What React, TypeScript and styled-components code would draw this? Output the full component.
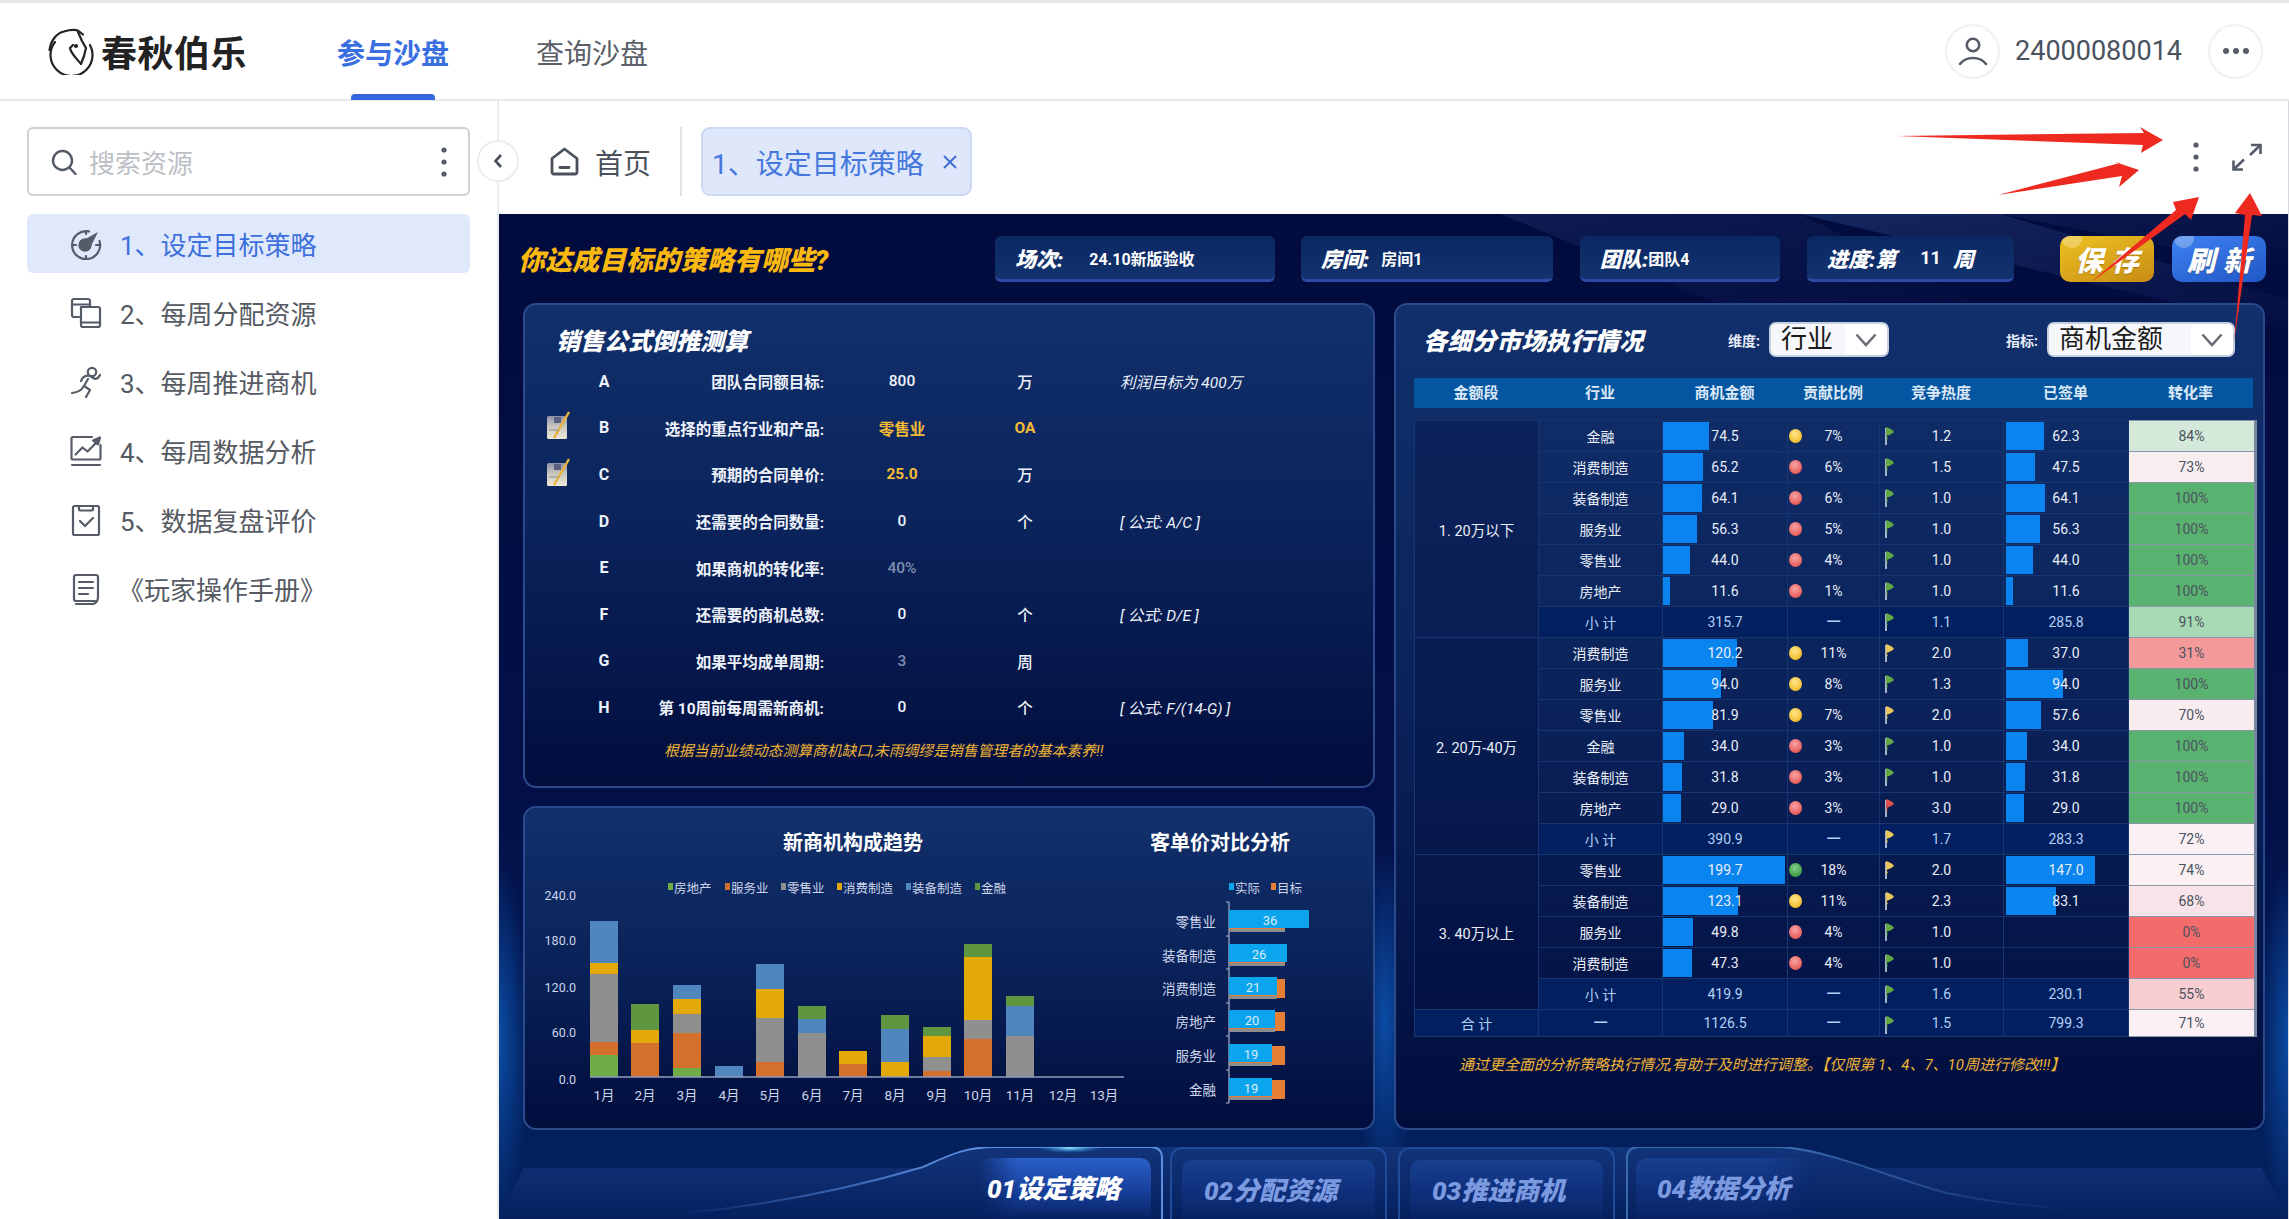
import React from "react";
import styled, { createGlobalStyle } from "styled-components";

const FONT = `Roboto, "Noto Sans CJK SC", sans-serif`;

const GlobalStyle = createGlobalStyle`
  html, body {
    margin: 0;
    width: 2289px;
    height: 1219px;
    overflow: hidden;
    background: #fff;
    font-family: ${FONT};
  }
  * { box-sizing: border-box; }
`;

const Page = styled.div`
  width: 2289px;
  height: 1219px;
  display: flex;
  flex-direction: column;
  position: relative;
  overflow: hidden;
`;

/* ---------- header ---------- */

const Header = styled.header`
  height: 101px;
  flex: none;
  display: flex;
  align-items: center;
  padding: 0 26px 0 47px;
  border-top: 3px solid #e6e6e8;
  border-bottom: 2px solid #e9e9eb;
`;

const Logo = styled.div`
  display: flex;
  align-items: center;
  gap: 7px;
  width: 290px;
  font-size: 36px;
  font-weight: 700;
  color: #222;
  letter-spacing: 0.5px;
`;

const HeadTab = styled.div<{ $active?: boolean }>`
  position: relative;
  width: 199px;
  height: 96px;
  line-height: 103px;
  font-size: 28px;
  font-weight: ${({ $active }) => ($active ? 700 : 400)};
  color: ${({ $active }) => ($active ? "#3a6fe2" : "#5a5f68")};

  &::after {
    content: "";
    display: ${({ $active }) => ($active ? "block" : "none")};
    position: absolute;
    left: 14px;
    bottom: -1px;
    width: 84px;
    height: 6px;
    border-radius: 4px 4px 0 0;
    background: #3566dd;
  }
`;

const UserBox = styled.div`
  margin-left: auto;
  display: flex;
  align-items: center;
  gap: 15px;
  font-size: 27px;
  color: #4a5260;
`;

const RoundIcon = styled.div`
  width: 55px;
  height: 55px;
  display: flex;
  align-items: center;
  justify-content: center;
  border: 2px solid #f1f1f3;
  border-radius: 50%;
  background: #fff;
`;

const MoreRound = styled(RoundIcon)`
  margin-left: 11px;
`;

/* ---------- body + sidebar ---------- */

const Body = styled.div`
  flex: 1;
  display: flex;
  min-height: 0;
  position: relative;
`;

const Sidebar = styled.aside`
  width: 499px;
  flex: none;
  padding: 26px 27px 0;
  border-right: 2px solid #ececee;
`;

const SearchBox = styled.div`
  height: 69px;
  display: flex;
  align-items: center;
  padding: 0 21px 0 22px;
  border: 2px solid #cfcfd4;
  border-radius: 6px;
  font-size: 26px;
  color: #bcbfc4;
`;

const SearchText = styled.span`
  margin-left: 12px;
  flex: 1;
`;

const SideNav = styled.nav`
  margin-top: 18px;
  display: flex;
  flex-direction: column;
  gap: 10px;
`;

const SideItem = styled.div<{ $active?: boolean }>`
  height: 59px;
  display: flex;
  align-items: center;
  gap: 18px;
  padding-left: 43px;
  border-radius: 6px;
  font-size: 26px;
  color: ${({ $active }) => ($active ? "#3d70dc" : "#555a63")};
  background: ${({ $active }) => ($active ? "#e0e9fc" : "transparent")};
`;

const ManualText = styled.span`
  margin-left: -2px;
  white-space: nowrap;
`;

const CollapseButton = styled.div`
  position: absolute;
  left: 477px;
  top: 39px;
  width: 42px;
  height: 42px;
  display: flex;
  align-items: center;
  justify-content: center;
  background: #fff;
  border: 2px solid #ececee;
  border-radius: 50%;
  z-index: 2;
`;

/* ---------- main column ---------- */

const Main = styled.main`
  flex: 1;
  min-width: 0;
  display: flex;
  flex-direction: column;
  border-right: 1px solid #d8d8dc;
`;

const TabBar = styled.div`
  height: 113px;
  flex: none;
  display: flex;
  align-items: flex-start;
  padding: 26px 26px 0 51px;
`;

const HomeTab = styled.div`
  height: 69px;
  display: flex;
  align-items: center;
  gap: 16px;
  font-size: 28px;
  color: #4b515c;
`;

const TabDivider = styled.div`
  width: 2px;
  height: 69px;
  margin: 0 19px 0 29px;
  background: #e2e2e6;
`;

const OpenTab = styled.div`
  width: 271px;
  height: 69px;
  display: flex;
  align-items: center;
  padding: 0 12px 0 9px;
  font-size: 28px;
  color: #4577dd;
  background: #dfe8fb;
  border: 2px solid #cbd9f6;
  border-radius: 9px;
`;

const OpenTabLabel = styled.span`
  flex: 1;
  white-space: nowrap;
`;

const TabActions = styled.div`
  margin-left: auto;
  margin-top: 15px;
  display: flex;
  align-items: center;
  gap: 33px;
`;

/* ---------- dark stage ---------- */

const Stage = styled.section`
  flex: 1;
  position: relative;
  overflow: hidden;
  background: linear-gradient(180deg, #020b3d 0%, #031048 58%, #03205c 91%, #04215e 100%);
`;

const StageDecor = styled.svg`
  position: absolute;
  left: 0;
  top: 0;
`;

const StageInner = styled.div`
  position: relative;
  display: flex;
  flex-direction: column;
  height: 100%;
  padding: 22px 0 0 21px;
`;

const TopRow = styled.div`
  height: 46px;
  display: flex;
  align-items: center;
`;

const PageTitle = styled.h1`
  width: 475px;
  flex: none;
  margin: -2px 0 0 -2px;
  font-size: 27px;
  font-weight: 900;
  font-style: italic;
  color: #fbb80f;
  white-space: nowrap;
`;

const InfoBadge = styled.div<{ $width: number; $gap: number; $first?: boolean }>`
  width: ${({ $width }) => $width}px;
  height: 46px;
  flex: none;
  margin-left: ${({ $first }) => ($first ? 2 : 0)}px;
  margin-right: ${({ $gap }) => $gap}px;
  display: flex;
  align-items: center;
  padding-left: 20px;
  color: #fff;
  background: linear-gradient(180deg, #0b2762, #12336f);
  border-bottom: 3px solid #2e4aa5;
  border-radius: 6px;
  white-space: nowrap;
`;

const BadgeLabel = styled.span<{ $left?: number }>`
  margin-left: ${({ $left }) => $left ?? 0}px;
  font-size: 21px;
  font-style: italic;
  font-weight: 900;
`;

const BadgeValue = styled.span<{ $left: number; $large?: boolean }>`
  margin-left: ${({ $left }) => $left}px;
  font-size: ${({ $large }) => ($large ? 18 : 16)}px;
  font-weight: 700;
`;

const ActionButton = styled.div<{ $from: string; $to: string; $gap?: number }>`
  position: relative;
  overflow: hidden;
  width: 94px;
  height: 46px;
  flex: none;
  margin-right: ${({ $gap }) => $gap ?? 0}px;
  display: flex;
  align-items: center;
  justify-content: center;
  border-radius: 10px;
  background: linear-gradient(160deg, ${({ $from }) => $from}, ${({ $to }) => $to});
  color: #fff;
  font-size: 28px;
  font-weight: 900;
  font-style: italic;
  letter-spacing: 8px;
  text-indent: 8px;
  text-shadow: 0 1px 1px rgba(80, 50, 0, 0.35);

  &::before {
    content: "";
    position: absolute;
    left: 2px;
    top: -6px;
    width: 20px;
    height: 18px;
    border-radius: 50%;
    background: rgba(255, 255, 255, 0.28);
  }
`;

const Columns = styled.div`
  margin: 21px 0 0 3px;
  display: grid;
  grid-template-columns: 852px 871px;
  column-gap: 19px;
  height: 827px;
`;

const LeftColumn = styled.div`
  display: flex;
  flex-direction: column;
  gap: 18px;
`;

const Panel = styled.div`
  border: 2px solid #2b4a8c;
  border-radius: 13px;
  background: linear-gradient(180deg, #11306c 0%, #0a2259 50%, #010d3d 100%);
`;

const FormulaPanel = styled(Panel)`
  height: 485px;
  padding: 21px 0 0 21px;
`;

const PanelTitle = styled.h2`
  margin: 0;
  height: 32px;
  line-height: 32px;
  font-size: 24px;
  font-weight: 900;
  font-style: italic;
  color: #fff;
  white-space: nowrap;
`;

const FormulaTitle = styled(PanelTitle)`
  margin-left: 10px;
`;

const FormulaRow = styled.div`
  height: 46.6px;
  display: grid;
  grid-template-columns: 44px 28px 206px 156px 90px 1fr;
  align-items: center;
  font-size: 15.5px;
  color: #eef2fa;
`;

const RowLetter = styled.span`
  text-align: center;
  font-weight: 700;
  font-size: 16px;
`;

const RowLabel = styled.span`
  text-align: right;
  white-space: nowrap;
  font-weight: 700;
`;

const RowValue = styled.span<{ $tone?: "gold" | "dim" }>`
  text-align: center;
  font-weight: ${({ $tone }) => ($tone === "gold" ? 700 : 500)};
  color: ${({ $tone }) =>
    $tone === "gold" ? "#f5bb35" : $tone === "dim" ? "#7f8db0" : "#eef2fa"};
`;

const RowNote = styled.span`
  margin-left: 50px;
  font-style: italic;
  white-space: nowrap;
  font-weight: 400;
`;

const GoldNote = styled.p`
  margin: 10px 0 0 118px;
  height: 20px;
  line-height: 20px;
  font-size: 14.8px;
  font-style: italic;
  color: #f0b335;
  white-space: nowrap;
`;

const ChartsPanel = styled(Panel)`
  height: 324px;
  display: flex;
  padding-top: 20px;
`;

const ChartBlock = styled.div<{ $width: number }>`
  width: ${({ $width }) => $width}px;
  flex: none;
`;

const ChartTitle = styled.h3<{ $pad: number; $narrow?: boolean }>`
  margin: 0;
  width: ${({ $narrow }) => ($narrow ? "170px" : "auto")};
  height: 30px;
  line-height: 30px;
  padding-left: ${({ $pad }) => $pad}px;
  text-align: center;
  font-size: 20px;
  font-weight: 700;
  color: #fff;
`;

const ChartSvg = styled.svg`
  display: block;
`;

const ChartText = styled.text`
  font-family: ${FONT};
  font-size: 13.5px;
  fill: #cdd6ea;
`;

const LegendText = styled(ChartText)`
  font-size: 12.5px;
`;

const CategoryText = styled(ChartText)`
  font-size: 13.5px;
`;

const BarValueText = styled(ChartText)`
  font-size: 13px;
  fill: #d8ecfa;
`;

/* ---------- market table ---------- */

const MarketPanel = styled(Panel)`
  padding-top: 17px;
`;

const MarketHead = styled.div`
  height: 35px;
  display: flex;
  align-items: center;
  padding-left: 27px;
`;

const MarketTitle = styled(PanelTitle)`
  width: 305px;
  margin-top: 5px;
  font-size: 24.5px;
`;

const FilterLabel = styled.span`
  width: 41px;
  font-size: 14px;
  font-weight: 700;
  color: #e6ebf6;
  white-space: nowrap;
`;

const Filter = styled.div<{ $width: number; $gap?: number }>`
  width: ${({ $width }) => $width}px;
  height: 35px;
  margin-right: ${({ $gap }) => $gap ?? 0}px;
  display: flex;
  overflow: hidden;
  font-size: 26px;
  color: #1a1a1a;
  background: #fff;
  border: 2px solid #c6cfdf;
  border-radius: 7px;
  white-space: nowrap;
`;

const FilterValue = styled.span`
  flex: 1;
  padding-left: 10px;
  line-height: 31px;
  background: #f6f7fb;
`;

const FilterChevron = styled.span`
  width: 42px;
  flex: none;
  display: flex;
  align-items: center;
  justify-content: center;
`;

const TableWrap = styled.div`
  margin: 21px 0 0 18px;
  width: 843px;
`;

const HeadRow = styled.div`
  width: 839px;
  height: 30px;
  display: grid;
  grid-template-columns: 124px 124px 125px 92px 124px 125px 125px;
  background: #03569f;
`;

const HeadCell = styled.div`
  text-align: center;
  line-height: 30px;
  font-size: 15px;
  font-weight: 700;
  color: #dbe8f7;
`;

const BodyTable = styled.table`
  margin-top: 12px;
  width: 841px;
  table-layout: fixed;
  border-collapse: collapse;
  font-size: 14px;
  color: #e9eef8;
`;

const SegmentCell = styled.td`
  padding: 0;
  text-align: center;
  font-size: 14.5px;
  border: 1px solid #173571;
  background: rgba(2, 14, 60, 0.28);
`;

const DataCell = styled.td<{ $sum?: boolean }>`
  position: relative;
  height: 31px;
  padding: 0;
  text-align: center;
  border: 1px solid #173571;
  background: ${({ $sum }) => ($sum ? "#02205f" : "transparent")};
  color: ${({ $sum }) => ($sum ? "#b3d0f7" : "#e9eef8")};
`;

const TotalRow = styled.tr`
  & > td {
    height: 27px;
  }
`;

const BarFill = styled.span<{ $inset?: number }>`
  position: absolute;
  left: ${({ $inset }) => $inset ?? 0}px;
  top: 1px;
  height: 28px;
  background: #0a84ef;
`;

const CellText = styled.span`
  position: relative;
`;

const Dash = styled.span`
  font-size: 20px;
  line-height: 1;
`;

const HeatDot = styled.span<{ $color: string; $light: string }>`
  position: absolute;
  left: 1px;
  top: 8px;
  width: 13px;
  height: 14px;
  border-radius: 50%;
  background: radial-gradient(circle at 45% 35%, ${({ $light }) => $light}, ${({ $color }) => $color} 70%);
`;

const FlagWrap = styled.span`
  position: absolute;
  left: 2px;
  top: 5px;
  display: block;
  line-height: 0;
`;

const RateCell = styled.td<{ $bg: string }>`
  padding: 0;
  text-align: center;
  color: #4b5260;
  background: ${({ $bg }) => $bg};
  border: 1px solid #8d97ac;
  border-right: 3px solid #7a869f;
`;

const MarketNote = styled.p`
  margin: 18px 0 0 63px;
  height: 20px;
  line-height: 20px;
  font-size: 15px;
  font-style: italic;
  color: #f0b335;
  white-space: nowrap;
`;

/* ---------- bottom step tabs ---------- */

const StepRow = styled.div`
  position: relative;
  margin: 17px 0 0 -21px;
  flex: 1;
  display: flex;
  padding-left: 470px;
`;

const StepBand = styled.svg`
  position: absolute;
  left: 0;
  top: 0;
`;

const StepTab = styled.div<{ $width: number; $gap: number; $framed?: boolean }>`
  position: relative;
  width: ${({ $width }) => $width}px;
  margin-right: ${({ $gap }) => $gap}px;
  padding: 11px 10px 0;
  border: ${({ $framed }) => ($framed ? "2px solid #1f4b98" : "none")};
  border-bottom: none;
  border-radius: 12px 12px 0 0;
`;

const StepInner = styled.div<{ $active?: boolean; $fade?: "left" | "right" }>`
  height: 100%;
  border-radius: 10px 10px 0 0;
  background: linear-gradient(
    180deg,
    ${({ $active }) => ($active ? "#2a5fca" : "#17408f")} 0%,
    ${({ $active }) => ($active ? "#173f9a" : "#0f2f7b")} 55%,
    rgba(12, 40, 110, 0.25) 100%
  );
  mask-image: ${({ $fade }) =>
    $fade === "left"
      ? "linear-gradient(90deg, transparent, #000 22%)"
      : $fade === "right"
        ? "linear-gradient(270deg, transparent, #000 30%)"
        : "none"};
`;

const StepLabel = styled.div<{ $active?: boolean; $inset: number }>`
  position: absolute;
  left: ${({ $inset }) => $inset}px;
  top: 20px;
  font-size: 26px;
  line-height: 44px;
  font-weight: 900;
  font-style: italic;
  color: ${({ $active }) => ($active ? "#fff" : "#7c9ae0")};
  white-space: nowrap;
`;

const ArrowLayer = styled.svg`
  position: absolute;
  left: 0;
  top: 0;
  pointer-events: none;
  z-index: 5;
`;

/* ---------- icons ---------- */

const ICON = "#555c68";

function LogoMark() {
  return (
    <svg width="47" height="47" viewBox="0 0 47 47" fill="none" stroke="#222" strokeWidth="2.2" strokeLinecap="round" strokeLinejoin="round">
      <path d="M8 14A21 21 0 1 0 43 17" />
      <path d="M2.500 22C4 12 10 5 17 3.500 22 2 27 1.500 31 2.500l5 4" />
      <path d="M31 4l4 9 4 7-2 8-3 8c-3-4-10-10-11-16l3-3" />
      <circle cx="29" cy="18" r="1" fill="#222" />
    </svg>
  );
}

function UserIcon() {
  return (
    <svg width="30" height="30" viewBox="0 0 30 30" fill="none" stroke="#555c68" strokeWidth="2.6" strokeLinecap="round">
      <circle cx="15" cy="9" r="6.2" />
      <path d="M2 28c3-4 8-6 13-6s10 2 13 6" />
    </svg>
  );
}

function HDots() {
  return (
    <svg width="28" height="8" viewBox="0 0 28 8" fill="#555c68">
      <circle cx="4" cy="4" r="3" />
      <circle cx="14" cy="4" r="3" />
      <circle cx="24" cy="4" r="3" />
    </svg>
  );
}

function VDots({ size = 30, fill = ICON }: { size?: number; fill?: string }) {
  return (
    <svg width="6" height={size} viewBox={`0 0 6 ${size}`} fill={fill}>
      <circle cx="3" cy="3" r="2.6" />
      <circle cx="3" cy={size / 2} r="2.6" />
      <circle cx="3" cy={size - 3} r="2.6" />
    </svg>
  );
}

function ExpandIcon() {
  return (
    <svg width="30" height="28" viewBox="0 0 30 28" fill="none" stroke="#555c68" strokeWidth="2.6">
      <path d="M19 2h9.5v9" />
      <path d="M28 2.500L18 12" />
      <path d="M11 26.500H1.500v-9" />
      <path d="M2 26l10-9.500" />
    </svg>
  );
}

function SearchIcon() {
  return (
    <svg width="26" height="26" viewBox="0 0 26 26" fill="none" stroke="#555c68" strokeWidth="2.4" strokeLinecap="round">
      <circle cx="11.5" cy="11.5" r="9.5" />
      <path d="M18.500 18.500L24.500 25" />
    </svg>
  );
}

function HomeIcon() {
  return (
    <svg width="29" height="29" viewBox="0 0 29 29" fill="none" stroke="#4b515c" strokeWidth="2.8" strokeLinejoin="round" strokeLinecap="round">
      <path d="M2 11.500L14.500 2 27 11.500V25a2 2 0 0 1-2 2H4a2 2 0 0 1-2-2z" />
      <path d="M10 20.500h9" />
    </svg>
  );
}

function NavIcon({ kind }: { kind: number }) {
  const common = { width: 32, height: 32, viewBox: "0 0 32 32", fill: "none", stroke: ICON, strokeWidth: 2.2, strokeLinecap: "round" as const, strokeLinejoin: "round" as const };
  if (kind === 0)
    return (
      <svg {...common}>
        <path d="M19 3.400A14 14 0 1 0 29.500 13" />
        <path d="M16 3v3M3 17h3M16 28v3M26 17h3" />
        <circle cx="15" cy="17" r="5.600" fill={ICON} />
        <path d="M12 13L28 4l-8 16z" fill={ICON} stroke="none" />
      </svg>
    );
  if (kind === 1)
    return (
      <svg {...common}>
        <path d="M20 9V4a2 2 0 0 0-2-2H4a2 2 0 0 0-2 2v14a2 2 0 0 0 2 2h5" />
        <path d="M2.500 7.500H19" />
        <path d="M11 10h17a2 2 0 0 1 2 2v16a2 2 0 0 1-2 2H13a2 2 0 0 1-2-2V10" />
        <path d="M11 25.500h19" />
      </svg>
    );
  if (kind === 2)
    return (
      <svg {...common}>
        <circle cx="22" cy="6" r="4.200" />
        <path d="M30 9c-1 2-3 4-5 4l-5-3c-3-1-6 0-8 3l-1 2" />
        <path d="M18 13l-4 7 6 4-4 7" />
        <path d="M13 21c-1 3-4 5-11 6" />
      </svg>
    );
  if (kind === 3)
    return (
      <svg {...common}>
        <path d="M22 2H3a1.500 1.500 0 0 0-1.500 1.500V23A1.500 1.500 0 0 0 3 24.500h26a1.500 1.500 0 0 0 1.500-1.500V10" />
        <path d="M5.500 19.500l7-7 5 4 9-9" />
        <path d="M23 5.500l7-3-2 7z" fill={ICON} />
        <path d="M2 30h28" />
      </svg>
    );
  if (kind === 4)
    return (
      <svg {...common}>
        <rect x="3" y="2" width="26" height="29" rx="1.500" />
        <path d="M9 2v3.500a1 1 0 0 0 1 1h12a1 1 0 0 0 1-1V2" />
        <path d="M10 17l5 5 8-8" />
      </svg>
    );
  return (
    <svg {...common}>
      <path d="M25 28H6a2 2 0 0 1-2-2V4a2 2 0 0 1 2-2h20a2 2 0 0 1 2 2v20c0 3-1 6-5 7H6" />
      <path d="M9 9h14M9 15h14M9 21h9" />
    </svg>
  );
}

function PadIcon() {
  return (
    <svg width="24" height="29" viewBox="0 0 24 29">
      <defs>
        <linearGradient id="padFill" x1="0" x2="0" y1="0" y2="1">
          <stop offset="0" stopColor="#8c91a8" />
          <stop offset="0.45" stopColor="#c9c6c0" />
          <stop offset="1" stopColor="#efe9d8" />
        </linearGradient>
      </defs>
      <rect x="1" y="5" width="20" height="23" rx="1.500" fill="url(#padFill)" />
      <rect x="8" y="6" width="7" height="6" fill="#5a6080" />
      <path d="M8 27L23 1" stroke="#e8b33a" strokeWidth="2.400" />
      <path d="M3 19h10" stroke="#9a9a9a" strokeWidth="1.200" />
    </svg>
  );
}

function FlagIcon({ color }: { color: string }) {
  return (
    <svg width="13" height="20" viewBox="0 0 13 20">
      <path d="M4 2v17" stroke="#cfd8e6" strokeWidth="1.600" />
      <path d="M4 1c4 1 7 3 8 5-2 2-5 3-8 4z" fill={color} />
      <path d="M4 10c1 1 2 2 2 3l-2 1z" fill={color} opacity="0.7" />
    </svg>
  );
}

function ChevronDown() {
  return (
    <svg width="22" height="14" viewBox="0 0 22 14" fill="none" stroke="#6a6f78" strokeWidth="2.600">
      <path d="M1.500 1.500L11 12l9.500-10.500" />
    </svg>
  );
}

/* ---------- data ---------- */

const NAV_ITEMS = [
  "1、设定目标策略",
  "2、每周分配资源",
  "3、每周推进商机",
  "4、每周数据分析",
  "5、数据复盘评价",
];

const FORMULA_ROWS: {
  letter: string;
  label: string;
  value: string;
  tone?: "gold" | "dim";
  unit?: string;
  unitGold?: boolean;
  note?: string;
  pad?: boolean;
}[] = [
  { letter: "A", label: "团队合同额目标:", value: "800", unit: "万", note: "利润目标为 400万" },
  { letter: "B", label: "选择的重点行业和产品:", value: "零售业", tone: "gold", unit: "OA", unitGold: true, pad: true },
  { letter: "C", label: "预期的合同单价:", value: "25.0", tone: "gold", unit: "万", pad: true },
  { letter: "D", label: "还需要的合同数量:", value: "0", unit: "个", note: "[ 公式: A/C ]" },
  { letter: "E", label: "如果商机的转化率:", value: "40%", tone: "dim" },
  { letter: "F", label: "还需要的商机总数:", value: "0", unit: "个", note: "[ 公式: D/E ]" },
  { letter: "G", label: "如果平均成单周期:", value: "3", tone: "dim", unit: "周" },
  { letter: "H", label: "第 10周前每周需新商机:", value: "0", unit: "个", note: "[ 公式: F/(14-G) ]" },
];

const SEG_COLORS = {
  g: "#70ad47",
  o: "#d2702c",
  a: "#8f8f8f",
  y: "#e3aa07",
  b: "#4f86bd",
  d: "#5f963f",
};
type SegKey = keyof typeof SEG_COLORS;

// column stacks: [colour, top, bottom], in picture pixels
const STACKS: { x: number; month: string; segs: [SegKey, number, number][] }[] = [
  { x: 604, month: "1月", segs: [["g", 1055, 1077], ["o", 1042, 1055], ["a", 974, 1042], ["y", 963, 974], ["b", 921, 963]] },
  { x: 645, month: "2月", segs: [["o", 1043, 1077], ["y", 1030, 1043], ["d", 1004, 1030]] },
  { x: 687, month: "3月", segs: [["g", 1068, 1077], ["o", 1033, 1068], ["a", 1014, 1033], ["y", 999, 1014], ["b", 985, 999]] },
  { x: 729, month: "4月", segs: [["b", 1066, 1077]] },
  { x: 770, month: "5月", segs: [["o", 1062, 1077], ["a", 1018, 1062], ["y", 989, 1018], ["b", 964, 989]] },
  { x: 812, month: "6月", segs: [["a", 1033, 1077], ["b", 1019, 1033], ["d", 1006, 1019]] },
  { x: 853, month: "7月", segs: [["o", 1064, 1077], ["y", 1051, 1064]] },
  { x: 895, month: "8月", segs: [["y", 1062, 1077], ["b", 1029, 1062], ["d", 1015, 1029]] },
  { x: 937, month: "9月", segs: [["o", 1071, 1077], ["a", 1057, 1071], ["y", 1036, 1057], ["d", 1027, 1036]] },
  { x: 978, month: "10月", segs: [["o", 1039, 1077], ["a", 1020, 1039], ["y", 957, 1020], ["d", 944, 957]] },
  { x: 1020, month: "11月", segs: [["a", 1036, 1077], ["b", 1006, 1036], ["d", 996, 1006]] },
  { x: 1063, month: "12月", segs: [] },
  { x: 1104, month: "13月", segs: [] },
];

const LEGEND: { x: number; key: SegKey; label: string }[] = [
  { x: 668, key: "g", label: "房地产" },
  { x: 725, key: "o", label: "服务业" },
  { x: 781, key: "a", label: "零售业" },
  { x: 837, key: "y", label: "消费制造" },
  { x: 906, key: "b", label: "装备制造" },
  { x: 975, key: "d", label: "金融" },
];

const PRICE_ROWS = [
  { name: "零售业", y: 922, end: 1309, label: 1270, value: "36" },
  { name: "装备制造", y: 956, end: 1287, label: 1259, value: "26" },
  { name: "消费制造", y: 989, end: 1277, label: 1253, value: "21" },
  { name: "房地产", y: 1022, end: 1275, label: 1252, value: "20" },
  { name: "服务业", y: 1056, end: 1272, label: 1251, value: "19" },
  { name: "金融", y: 1090, end: 1272, label: 1251, value: "19" },
];

const DOT = {
  y: { color: "#f2bf30", light: "#ffe58a" },
  r: { color: "#e85e5e", light: "#f7a3a3" },
  g: { color: "#3f9f48", light: "#7fcc86" },
};
const FLAG = { g: "#62a844", y: "#e8c65a", r: "#e0504a" };

type Row = {
  name: string;
  amount: number;
  dot?: keyof typeof DOT;
  share?: string;
  flag: keyof typeof FLAG;
  heat: string;
  signed?: number;
  rate: string;
  bg: string;
  sum?: boolean;
};

const GREEN = "#59b26f";

const GROUPS: { title: string; rows: Row[] }[] = [
  {
    title: "1. 20万以下",
    rows: [
      { name: "金融", amount: 74.5, dot: "y", share: "7%", flag: "g", heat: "1.2", signed: 62.3, rate: "84%", bg: "#d4e9da" },
      { name: "消费制造", amount: 65.2, dot: "r", share: "6%", flag: "g", heat: "1.5", signed: 47.5, rate: "73%", bg: "#f8eef0" },
      { name: "装备制造", amount: 64.1, dot: "r", share: "6%", flag: "g", heat: "1.0", signed: 64.1, rate: "100%", bg: GREEN },
      { name: "服务业", amount: 56.3, dot: "r", share: "5%", flag: "g", heat: "1.0", signed: 56.3, rate: "100%", bg: GREEN },
      { name: "零售业", amount: 44.0, dot: "r", share: "4%", flag: "g", heat: "1.0", signed: 44.0, rate: "100%", bg: GREEN },
      { name: "房地产", amount: 11.6, dot: "r", share: "1%", flag: "g", heat: "1.0", signed: 11.6, rate: "100%", bg: GREEN },
      { name: "小 计", amount: 315.7, flag: "g", heat: "1.1", signed: 285.8, rate: "91%", bg: "#a6d9b4", sum: true },
    ],
  },
  {
    title: "2. 20万-40万",
    rows: [
      { name: "消费制造", amount: 120.2, dot: "y", share: "11%", flag: "y", heat: "2.0", signed: 37.0, rate: "31%", bg: "#f59a9a" },
      { name: "服务业", amount: 94.0, dot: "y", share: "8%", flag: "g", heat: "1.3", signed: 94.0, rate: "100%", bg: GREEN },
      { name: "零售业", amount: 81.9, dot: "y", share: "7%", flag: "y", heat: "2.0", signed: 57.6, rate: "70%", bg: "#f9ecef" },
      { name: "金融", amount: 34.0, dot: "r", share: "3%", flag: "g", heat: "1.0", signed: 34.0, rate: "100%", bg: GREEN },
      { name: "装备制造", amount: 31.8, dot: "r", share: "3%", flag: "g", heat: "1.0", signed: 31.8, rate: "100%", bg: GREEN },
      { name: "房地产", amount: 29.0, dot: "r", share: "3%", flag: "r", heat: "3.0", signed: 29.0, rate: "100%", bg: GREEN },
      { name: "小 计", amount: 390.9, flag: "y", heat: "1.7", signed: 283.3, rate: "72%", bg: "#fbf0f3", sum: true },
    ],
  },
  {
    title: "3. 40万以上",
    rows: [
      { name: "零售业", amount: 199.7, dot: "g", share: "18%", flag: "y", heat: "2.0", signed: 147.0, rate: "74%", bg: "#fbf1f3" },
      { name: "装备制造", amount: 123.1, dot: "y", share: "11%", flag: "y", heat: "2.3", signed: 83.1, rate: "68%", bg: "#f8e4e8" },
      { name: "服务业", amount: 49.8, dot: "r", share: "4%", flag: "g", heat: "1.0", rate: "0%", bg: "#f46b6b" },
      { name: "消费制造", amount: 47.3, dot: "r", share: "4%", flag: "g", heat: "1.0", rate: "0%", bg: "#f46b6b" },
      { name: "小 计", amount: 419.9, flag: "g", heat: "1.6", signed: 230.1, rate: "55%", bg: "#f8cdd1", sum: true },
    ],
  },
];

const HEADS = ["金额段", "行业", "商机金额", "贡献比例", "竞争热度", "已签单", "转化率"];
const COL_WIDTHS = [124, 124, 125, 92, 124, 125, 127];

/* ---------- parts ---------- */

function TrendChart() {
  return (
    <ChartSvg width="610" height="270" viewBox="525 858 610 270">
      {LEGEND.map(item => (
        <g key={item.label}>
          <rect x={item.x} y={883} width={5} height={7} fill={SEG_COLORS[item.key]} />
          <LegendText x={item.x + 6} y={893}>{item.label}</LegendText>
        </g>
      ))}
      {[["240.0", 900], ["180.0", 945], ["120.0", 992], ["60.0", 1037], ["0.0", 1084]].map(([text, y]) => (
        <LegendText key={text} x={576} y={y} textAnchor="end">{text}</LegendText>
      ))}
      {STACKS.map(stack => (
        <g key={stack.month}>
          {stack.segs.map(([key, top, bottom]) => (
            <rect key={key + top} x={stack.x - 14} y={top} width={28} height={bottom - top} fill={SEG_COLORS[key]} />
          ))}
          <ChartText x={stack.x} y={1100} textAnchor="middle">{stack.month}</ChartText>
        </g>
      ))}
      <path d="M590 1077H1124" stroke="#8f9dbd" strokeWidth="1.500" />
    </ChartSvg>
  );
}

function PriceChart() {
  return (
    <ChartSvg width="238" height="270" viewBox="1135 858 238 270">
      <rect x="1229" y="883" width="5" height="7" fill="#0aa5ec" />
      <LegendText x="1235" y="893">实际</LegendText>
      <rect x="1271" y="883" width="5" height="7" fill="#e57f35" />
      <LegendText x="1277" y="893">目标</LegendText>
      <path d="M1229 902V1103" stroke="#9aa6c2" strokeWidth="1.300" />
      {[902, 936, 969, 1003, 1036, 1070, 1103].map(y => (
        <path key={y} d={`M1226 ${y}H1229`} stroke="#9aa6c2" strokeWidth="1.200" />
      ))}
      {PRICE_ROWS.map(row => (
        <g key={row.name}>
          <CategoryText x={1216} y={row.y + 5} textAnchor="end">{row.name}</CategoryText>
          <rect x={1229} y={row.y - 10} width={56} height={19} fill="#e57f35" />
          <rect x={1229} y={row.y + 7} width={row.end > 1285 ? 56 : row.end - 1229} height={3} fill="#8c8c8c" />
          <rect x={1229} y={row.y - 12} width={row.end - 1229} height={18} fill="#0aa5ec" />
          <BarValueText x={row.label} y={row.y + 3} textAnchor="middle">{row.value}</BarValueText>
        </g>
      ))}
    </ChartSvg>
  );
}

function MarketRow({ row, seg, span }: { row: Row; seg?: string; span?: number }) {
  return (
    <tr>
      {seg && <SegmentCell rowSpan={span}>{seg}</SegmentCell>}
      <DataCell $sum={row.sum}>{row.name}</DataCell>
      <DataCell $sum={row.sum}>
        {!row.sum && <BarFill style={{ width: row.amount * 0.612 }} />}
        <CellText>{row.amount.toFixed(1)}</CellText>
      </DataCell>
      <DataCell $sum={row.sum}>
        {row.dot && <HeatDot $color={DOT[row.dot].color} $light={DOT[row.dot].light} />}
        {row.share ? <CellText>{row.share}</CellText> : <Dash>—</Dash>}
      </DataCell>
      <DataCell $sum={row.sum}>
        <FlagWrap><FlagIcon color={FLAG[row.flag]} /></FlagWrap>
        <CellText>{row.heat}</CellText>
      </DataCell>
      <DataCell $sum={row.sum}>
        {!row.sum && row.signed !== undefined && <BarFill $inset={2} style={{ width: row.signed * 0.605 }} />}
        <CellText>{row.signed !== undefined ? row.signed.toFixed(1) : ""}</CellText>
      </DataCell>
      <RateCell $bg={row.bg}>{row.rate}</RateCell>
    </tr>
  );
}

export default function App() {
  return (
    <Page>
      <GlobalStyle />
      <Header>
        <Logo>
          <LogoMark />
          春秋伯乐
        </Logo>
        <HeadTab $active>参与沙盘</HeadTab>
        <HeadTab>查询沙盘</HeadTab>
        <UserBox>
          <RoundIcon><UserIcon /></RoundIcon>
          24000080014
          <MoreRound><HDots /></MoreRound>
        </UserBox>
      </Header>

      <Body>
        <Sidebar>
          <SearchBox>
            <SearchIcon />
            <SearchText>搜索资源</SearchText>
            <VDots />
          </SearchBox>
          <SideNav>
            {NAV_ITEMS.map((label, index) => (
              <SideItem key={label} $active={index === 0}>
                <NavIcon kind={index} />
                {label}
              </SideItem>
            ))}
            <SideItem>
              <NavIcon kind={5} />
              <ManualText>《玩家操作手册》</ManualText>
            </SideItem>
          </SideNav>
        </Sidebar>

        <CollapseButton>
          <svg width="10" height="16" viewBox="0 0 10 16" fill="none" stroke="#4b515c" strokeWidth="2.600">
            <path d="M8 2L2.500 8 8 14" />
          </svg>
        </CollapseButton>

        <Main>
          <TabBar>
            <HomeTab>
              <HomeIcon />
              首页
            </HomeTab>
            <TabDivider />
            <OpenTab>
              <OpenTabLabel>1、设定目标策略</OpenTabLabel>
              <svg width="16" height="16" viewBox="0 0 16 16" stroke="#3f6fd8" strokeWidth="2">
                <path d="M2 2l12 12M14 2L2 14" />
              </svg>
            </OpenTab>
            <TabActions>
              <VDots />
              <ExpandIcon />
            </TabActions>
          </TabBar>

          <Stage>
            <StageDecor width="1790" height="1005" viewBox="499 214 1790 1005">
              <defs>
                <linearGradient id="ribbon" x1="0" y1="0" x2="1" y2="1">
                  <stop offset="0" stopColor="#3a5aa0" stopOpacity="0.35" />
                  <stop offset="1" stopColor="#3a5aa0" stopOpacity="0.02" />
                </linearGradient>
                <radialGradient id="sideGlow" cx="0.5" cy="0.5" r="0.5">
                  <stop offset="0" stopColor="#0c4ea8" stopOpacity="0.95" />
                  <stop offset="1" stopColor="#0c4ea8" stopOpacity="0" />
                </radialGradient>
              </defs>
              <path d="M1800 214H2000L2289 300V330z" fill="url(#ribbon)" />
              <path d="M1500 214H1800L1980 304H1720z" fill="url(#ribbon)" opacity="0.6" />
              <path d="M2000 214H2289V270z" fill="url(#ribbon)" opacity="0.5" />
              <ellipse cx="1385" cy="1020" rx="30" ry="170" fill="url(#sideGlow)" />
              <ellipse cx="499" cy="1040" rx="30" ry="180" fill="url(#sideGlow)" />
              <ellipse cx="2289" cy="1040" rx="30" ry="180" fill="url(#sideGlow)" />
            </StageDecor>

            <StageInner>
              <TopRow>
                <PageTitle>你达成目标的策略有哪些?</PageTitle>
                <InfoBadge $width={280} $gap={26} $first>
                  <BadgeLabel>场次:</BadgeLabel>
                  <BadgeValue $left={26}>24.10新版验收</BadgeValue>
                </InfoBadge>
                <InfoBadge $width={252} $gap={27}>
                  <BadgeLabel>房间:</BadgeLabel>
                  <BadgeValue $left={12}>房间1</BadgeValue>
                </InfoBadge>
                <InfoBadge $width={200} $gap={27}>
                  <BadgeLabel>团队:</BadgeLabel>
                  <BadgeValue $left={0}>团队4</BadgeValue>
                </InfoBadge>
                <InfoBadge $width={207} $gap={46}>
                  <BadgeLabel>进度:第</BadgeLabel>
                  <BadgeValue $left={24} $large>11</BadgeValue>
                  <BadgeLabel $left={12}>周</BadgeLabel>
                </InfoBadge>
                <ActionButton $from="#eec222" $to="#c78c14" $gap={18}>保存</ActionButton>
                <ActionButton $from="#3f82f2" $to="#2057c6">刷新</ActionButton>
              </TopRow>

              <Columns>
                <LeftColumn>
                  <FormulaPanel>
                    <FormulaTitle>销售公式倒推测算</FormulaTitle>
                    {FORMULA_ROWS.map(row => (
                      <FormulaRow key={row.letter}>
                        <span>{row.pad && <PadIcon />}</span>
                        <RowLetter>{row.letter}</RowLetter>
                        <RowLabel>{row.label}</RowLabel>
                        <RowValue $tone={row.tone}>{row.value}</RowValue>
                        <RowValue $tone={row.unitGold ? "gold" : undefined}>{row.unit}</RowValue>
                        <RowNote>{row.note}</RowNote>
                      </FormulaRow>
                    ))}
                    <GoldNote>根据当前业绩动态测算商机缺口,未雨绸缪是销售管理者的基本素养!!</GoldNote>
                  </FormulaPanel>

                  <ChartsPanel>
                    <ChartBlock $width={610}>
                      <ChartTitle $pad={46}>新商机构成趋势</ChartTitle>
                      <TrendChart />
                    </ChartBlock>
                    <ChartBlock $width={238}>
                      <ChartTitle $pad={0} $narrow>客单价对比分析</ChartTitle>
                      <PriceChart />
                    </ChartBlock>
                  </ChartsPanel>
                </LeftColumn>

                <MarketPanel>
                  <MarketHead>
                    <MarketTitle>各细分市场执行情况</MarketTitle>
                    <FilterLabel>维度:</FilterLabel>
                    <Filter $width={120} $gap={117}>
                      <FilterValue>行业</FilterValue>
                      <FilterChevron><ChevronDown /></FilterChevron>
                    </Filter>
                    <FilterLabel>指标:</FilterLabel>
                    <Filter $width={188}>
                      <FilterValue>商机金额</FilterValue>
                      <FilterChevron><ChevronDown /></FilterChevron>
                    </Filter>
                  </MarketHead>
                  <TableWrap>
                    <HeadRow>
                      {HEADS.map(head => <HeadCell key={head}>{head}</HeadCell>)}
                    </HeadRow>
                    <BodyTable>
                      <colgroup>
                        {COL_WIDTHS.map((width, index) => <col key={index} width={width} />)}
                      </colgroup>
                      <tbody>
                        {GROUPS.map(group =>
                          group.rows.map((row, index) => (
                            <MarketRow
                              key={group.title + row.name}
                              row={row}
                              seg={index === 0 ? group.title : undefined}
                              span={group.rows.length}
                            />
                          ))
                        )}
                        <TotalRow>
                          <DataCell $sum>合 计</DataCell>
                          <DataCell $sum><Dash>—</Dash></DataCell>
                          <DataCell $sum>1126.5</DataCell>
                          <DataCell $sum><Dash>—</Dash></DataCell>
                          <DataCell $sum>
                            <FlagWrap><FlagIcon color={FLAG.g} /></FlagWrap>
                            <CellText>1.5</CellText>
                          </DataCell>
                          <DataCell $sum>799.3</DataCell>
                          <RateCell $bg="#fbf0f3">71%</RateCell>
                        </TotalRow>
                      </tbody>
                    </BodyTable>
                  </TableWrap>
                  <MarketNote>通过更全面的分析策略执行情况,有助于及时进行调整。【仅限第 1、4、7、10周进行修改!!!】</MarketNote>
                </MarketPanel>
              </Columns>

              <StepRow>
                <StepBand width="1790" height="72" viewBox="499 1147 1790 72" fill="none">
                  <defs>
                    <linearGradient id="band" x1="0" x2="0" y1="0" y2="1">
                      <stop offset="0" stopColor="#12347a" />
                      <stop offset="1" stopColor="#06205e" />
                    </linearGradient>
                    <radialGradient id="spark" cx="0.5" cy="0.5" r="0.5">
                      <stop offset="0" stopColor="#8be6ff" />
                      <stop offset="1" stopColor="#2a8be0" stopOpacity="0" />
                    </radialGradient>
                    <linearGradient id="edgeLeft" gradientUnits="userSpaceOnUse" x1="677" y1="0" x2="960" y2="0">
                      <stop offset="0" stopColor="#5a8ee0" stopOpacity="0" />
                      <stop offset="1" stopColor="#5a8ee0" />
                    </linearGradient>
                    <linearGradient id="edgeRight" gradientUnits="userSpaceOnUse" x1="1790" y1="0" x2="2070" y2="0">
                      <stop offset="0" stopColor="#3a6aae" />
                      <stop offset="1" stopColor="#3a6aae" stopOpacity="0" />
                    </linearGradient>
                  </defs>
                  <path d="M523 1168H923C950 1158 965 1147 995 1147H1785C1815 1147 1835 1158 1862 1168H2262L2289 1219H499z" fill="url(#band)" />
                  <path d="M677 1214C770 1205 856 1187 923 1167 950 1155 965 1147 995 1147H1150Q1162 1147 1162 1158V1219" stroke="url(#edgeLeft)" strokeWidth="2" />
                  <path d="M1627 1219V1158Q1627 1147 1640 1147H1780C1830 1150 1890 1178 1947 1193 1990 1202 2020 1205 2070 1209" stroke="url(#edgeRight)" strokeWidth="2" />
                  <ellipse cx="1070" cy="1148" rx="32" ry="5" fill="url(#spark)" />
                </StepBand>
                <StepTab $width={192} $gap={9}>
                  <StepInner $active $fade="left" />
                  <StepLabel $active $inset={18}>01设定策略</StepLabel>
                </StepTab>
                <StepTab $width={217} $gap={11} $framed>
                  <StepInner />
                  <StepLabel $inset={32}>02分配资源</StepLabel>
                </StepTab>
                <StepTab $width={217} $gap={11} $framed>
                  <StepInner />
                  <StepLabel $inset={32}>03推进商机</StepLabel>
                </StepTab>
                <StepTab $width={200} $gap={0}>
                  <StepInner $fade="right" />
                  <StepLabel $inset={31}>04数据分析</StepLabel>
                </StepTab>
              </StepRow>
            </StageInner>
          </Stage>
        </Main>
      </Body>

      <ArrowLayer width="2289" height="1219" viewBox="0 0 2289 1219" fill="#ee2a20">
        <path d="M1897 136L2144 133 2140 127 2163 140 2141 153 2143 145z" />
        <path d="M1998 195L2120 163 2115 162 2139 170 2119 187 2122 176z" />
        <path d="M2090 283L2176 210 2173 202 2199 197 2191 220 2185 214z" />
        <path d="M2234 343L2245 215 2235 213 2250 193 2262 216 2252 215z" />
      </ArrowLayer>
    </Page>
  );
}
